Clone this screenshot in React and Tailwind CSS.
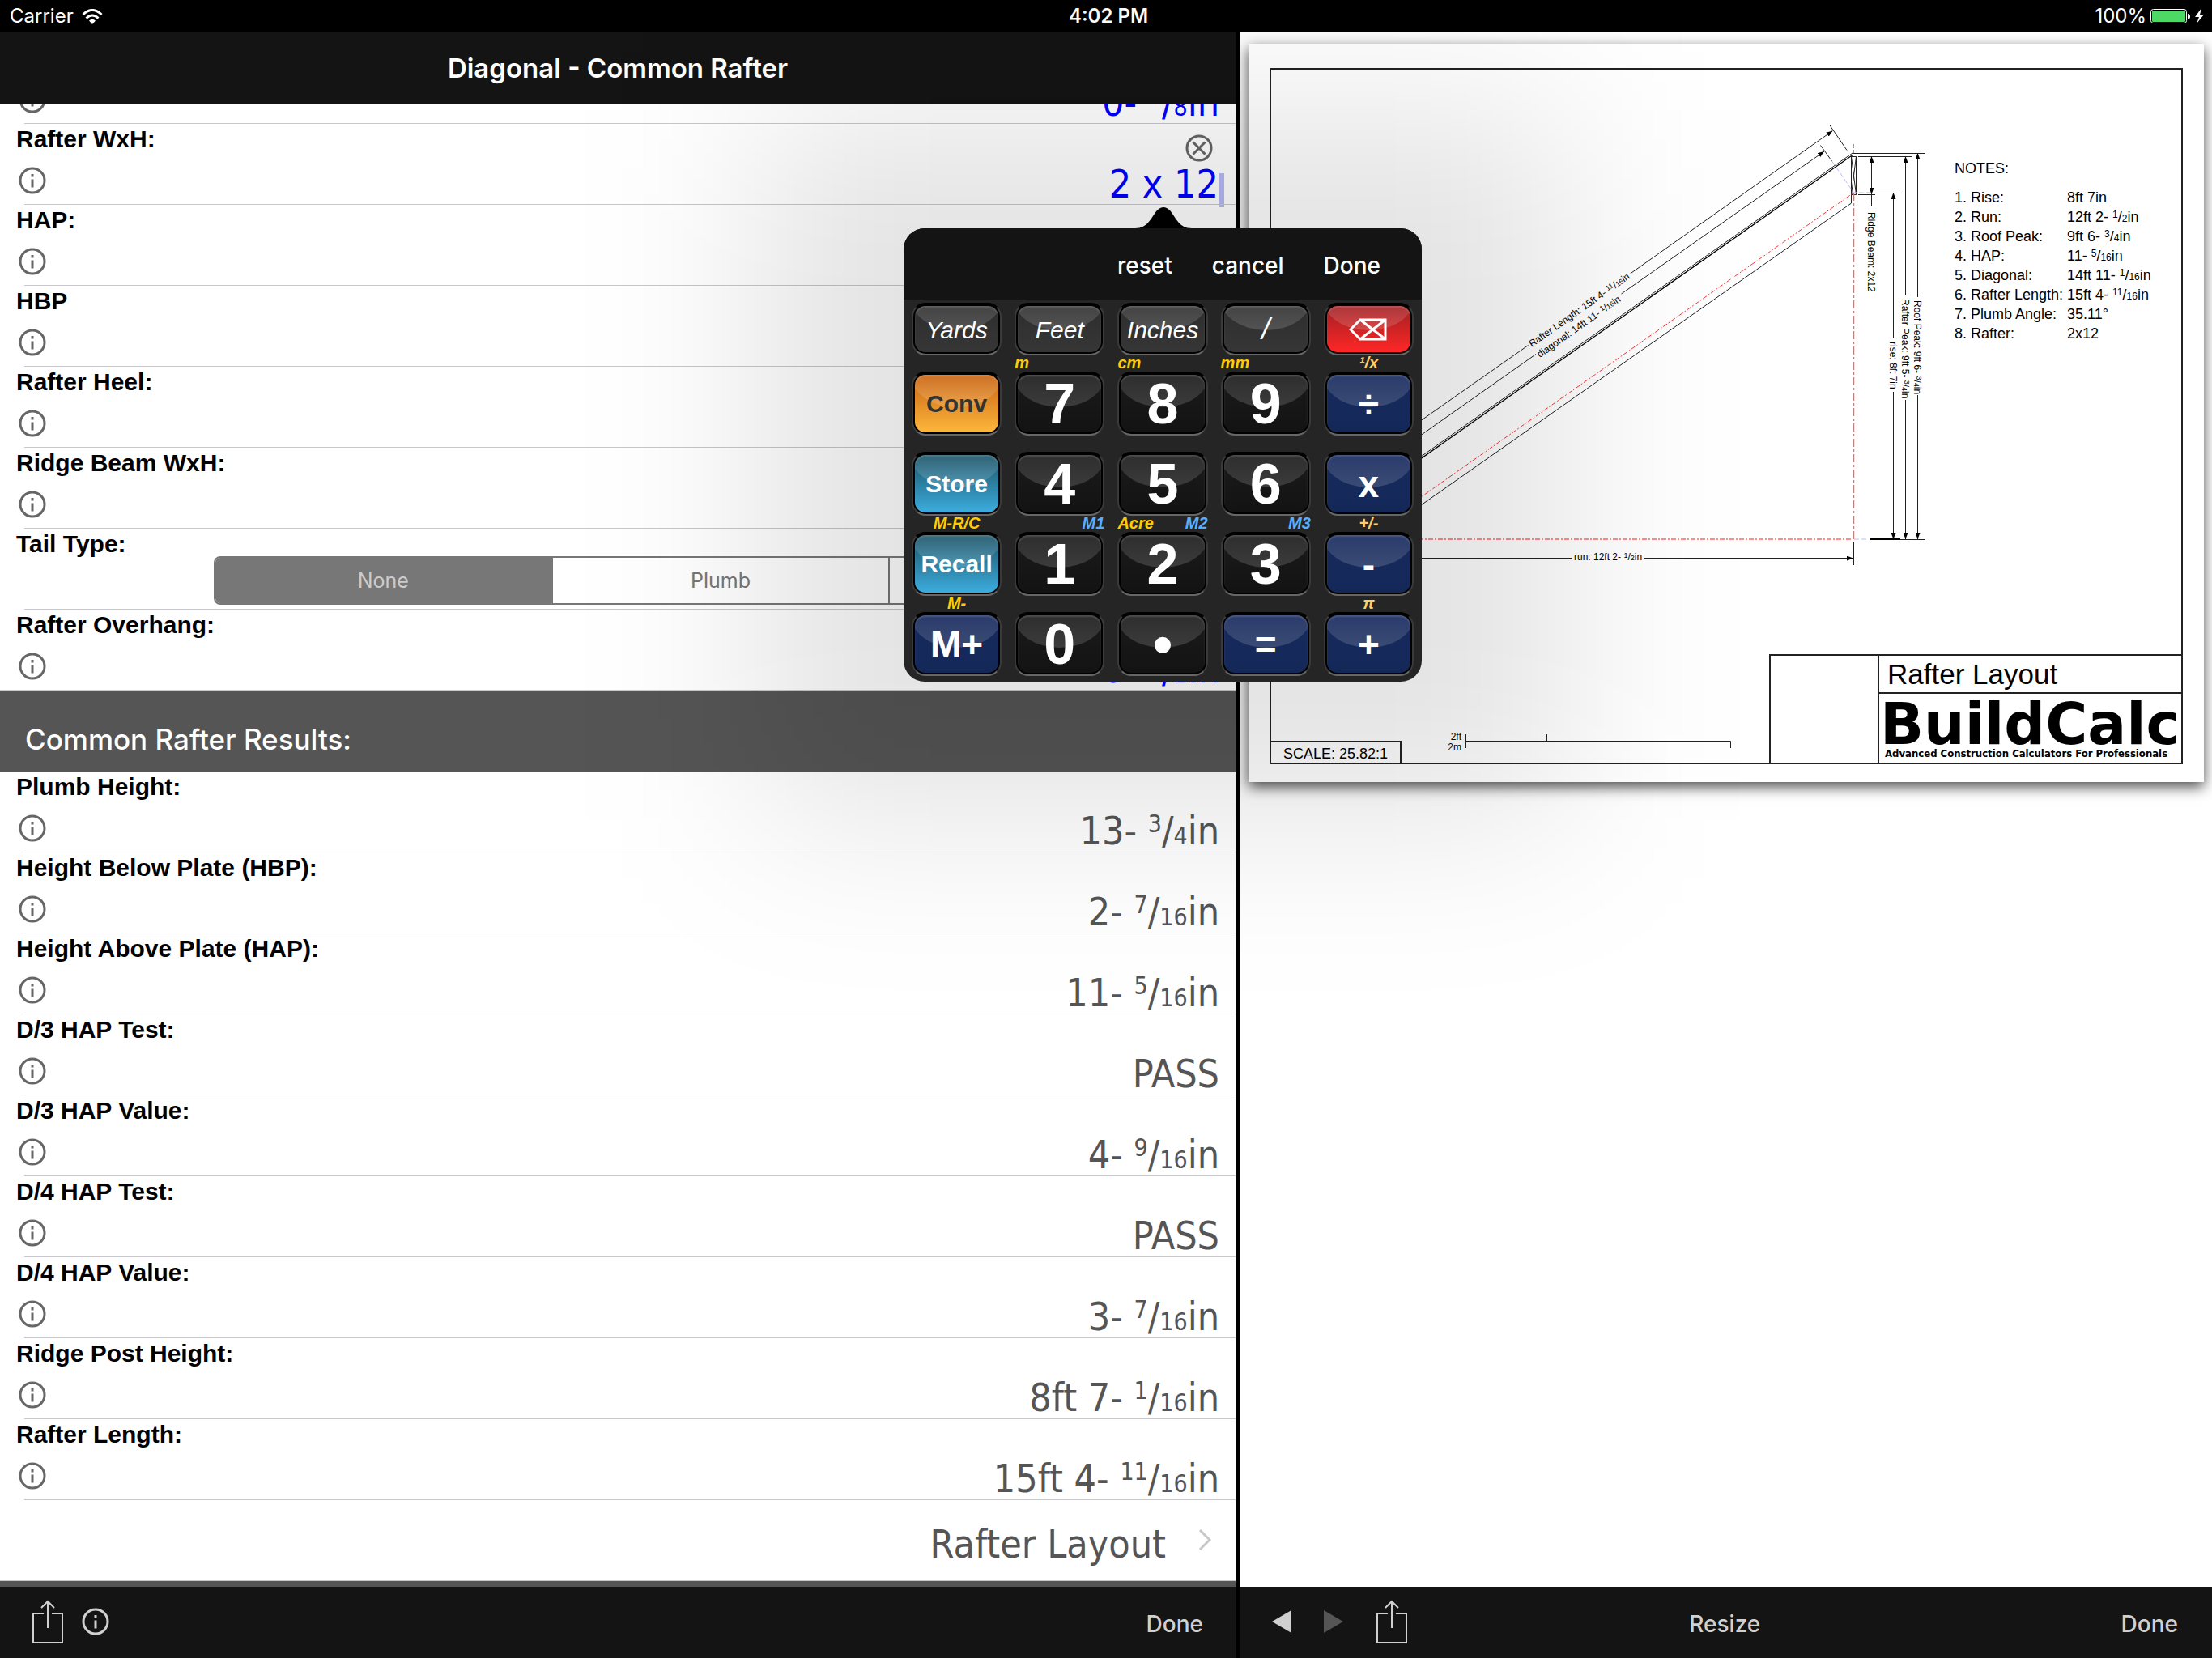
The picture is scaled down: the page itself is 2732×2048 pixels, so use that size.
import { useState } from 'react';

const INPUTS = ['HAP:', 'HBP', 'Rafter Heel:', 'Ridge Beam WxH:'];

const RESULTS = [
  { label: 'Plumb Height:', whole: '13-', frac: [3, 4] },
  { label: 'Height Below Plate (HBP):', whole: '2-', frac: [7, 16] },
  { label: 'Height Above Plate (HAP):', whole: '11-', frac: [5, 16] },
  { label: 'D/3 HAP Test:', whole: 'PASS' },
  { label: 'D/3 HAP Value:', whole: '4-', frac: [9, 16] },
  { label: 'D/4 HAP Test:', whole: 'PASS' },
  { label: 'D/4 HAP Value:', whole: '3-', frac: [7, 16] },
  { label: 'Ridge Post Height:', whole: '8ft 7-', frac: [1, 16] },
  { label: 'Rafter Length:', whole: '15ft 4-', frac: [11, 16] },
];

const NOTES = [
  { label: '1. Rise:', whole: '8ft 7in' },
  { label: '2. Run:', whole: '12ft 2-', frac: [1, 2] },
  { label: '3. Roof Peak:', whole: '9ft 6-', frac: [3, 4] },
  { label: '4. HAP:', whole: '11-', frac: [5, 16] },
  { label: '5. Diagonal:', whole: '14ft 11-', frac: [1, 16] },
  { label: '6. Rafter Length:', whole: '15ft 4-', frac: [11, 16] },
  { label: '7. Plumb Angle:', whole: '35.11°' },
  { label: '8. Rafter:', whole: '2x12' },
];

const KEY_ROWS = [
  [
    { text: 'Yards', tone: 'unit' },
    { text: 'Feet', tone: 'unit', left: 'm' },
    { text: 'Inches', tone: 'unit', left: 'cm' },
    { text: '/', tone: 'slash', left: 'mm' },
    { text: 'delete', tone: 'red', mid: '¹/x' },
  ],
  [
    { text: 'Conv', tone: 'orange' },
    { text: '7', tone: 'digit' },
    { text: '8', tone: 'digit' },
    { text: '9', tone: 'digit' },
    { text: '÷', tone: 'op' },
  ],
  [
    { text: 'Store', tone: 'teal', mid: 'M-R/C' },
    { text: '4', tone: 'digit', right: 'M1' },
    { text: '5', tone: 'digit', left: 'Acre', right: 'M2' },
    { text: '6', tone: 'digit', right: 'M3' },
    { text: 'x', tone: 'op', mid: '+/-' },
  ],
  [
    { text: 'Recall', tone: 'teal', mid: 'M-' },
    { text: '1', tone: 'digit' },
    { text: '2', tone: 'digit' },
    { text: '3', tone: 'digit' },
    { text: '-', tone: 'op', mid: 'π' },
  ],
  [
    { text: 'M+', tone: 'op' },
    { text: '0', tone: 'digit' },
    { text: '•', tone: 'digit' },
    { text: '=', tone: 'op' },
    { text: '+', tone: 'op' },
  ],
];

const TONES = {
  unit: 'bg-linear-to-b from-[#2e2e2e] to-[#363636] pt-[2px] text-white text-[30px] italic',
  slash: 'bg-linear-to-b from-[#2e2e2e] to-[#363636] text-white text-[36px] italic',
  digit: 'bg-linear-to-b from-[#1b1b1b] to-[#131313] text-white text-[70px] font-bold',
  op: 'bg-linear-to-b from-[#172a5e] to-[#142858] text-white text-[46px] font-bold',
  orange: 'bg-linear-to-b from-[#c8620f] to-[#fdb73c] text-[#333] text-[30px] font-bold',
  teal: 'bg-linear-to-b from-[#1d5468] to-[#3cadde] text-white text-[30px] font-bold',
  red: 'bg-linear-to-b from-[#a01f22] to-[#ff2626] text-white',
};

const InfoIcon = () => (
  <svg width="34" height="34" viewBox="0 0 34 34" fill="none" stroke="currentColor" strokeWidth="3">
    <circle cx="17" cy="17" r="15" />
    <path d="M17 15.5v10M17 9v3.4" />
  </svg>
);

const ClearIcon = () => (
  <svg width="34" height="34" viewBox="0 0 34 34" fill="none" stroke="currentColor" strokeWidth="3">
    <circle cx="17" cy="17" r="15" />
    <path d="M9.500 9.500l15 15M24.500 9.500l-15 15" />
  </svg>
);

const ShareIcon = () => (
  <svg width="40" height="54" viewBox="0 0 40 54" fill="none" stroke="currentColor" strokeWidth="2">
    <path d="M15 17H2v36h36V17H25" />
    <path d="M20 35V2M12 10l8-8 8 8" />
  </svg>
);

const DeleteIcon = () => (
  <svg width="48" height="28" viewBox="0 0 48 28" fill="none" stroke="currentColor" strokeWidth="3">
    <path d="M14 2h31v24H14L2 14z" />
    <path d="M14 2l31 24M45 2L14 26" />
  </svg>
);

const Value = ({ whole, frac }) => (
  <>
    {whole}
    {frac && (
      <>
        {' '}
        <span className="text-[30px] leading-none align-[15px]">{frac[0]}</span>/
        <span className="text-[30px] leading-none">{frac[1]}</span>in
      </>
    )}
  </>
);

const NoteValue = ({ whole, frac }) => (
  <>
    {whole}
    {frac && (
      <>
        {' '}
        <span className="text-[12px] leading-none align-[5px]">{frac[0]}</span>/
        <span className="text-[12px] leading-none">{frac[1]}</span>in
      </>
    )}
  </>
);

const Row = ({ label, info = true, children }) => (
  <div className="flex h-[100px] shrink-0 justify-between pr-2">
    <div className="flex flex-col pl-5">
      <span className="h-[53px] font-['Liberation_Sans',sans-serif] text-[30px] leading-[38px] font-bold whitespace-nowrap text-black">
        {label}
      </span>
      {info && (
        <button aria-label={`About ${label}`} className="ml-[3px] w-[34px] text-[#666]">
          <InfoIcon />
        </button>
      )}
    </div>
    {children}
  </div>
);

const Separator = () => <div className="-mt-px ml-[30px] h-px shrink-0 bg-[#c8c7cc]" />;

const Key = ({ item, short }) => (
  <button
    aria-label={item.text}
    className={`rounded-[17px] border-2 border-t-black border-x-[#3a3a3a] border-b-[#666] bg-black p-[2px] ${short ? 'h-[65px]' : 'h-[79px]'}`}
  >
    <span
      className={`relative flex h-full items-center justify-center overflow-hidden rounded-[13px] font-['Liberation_Sans',sans-serif] leading-none shadow-[inset_0_2px_2px_rgba(255,255,255,0.15)] ${TONES[item.tone]}`}
    >
      <span
        className={`absolute -inset-x-[6px] h-[84px] rounded-[50%] bg-linear-to-b from-white/0 to-white/16 ${short ? '-top-[54px]' : '-top-[44px]'}`}
      />
      <span className="relative">{item.tone === 'red' ? <DeleteIcon /> : item.text}</span>
    </span>
  </button>
);

const Caption = ({ item }) => (
  <div className="flex h-5 justify-between font-['Liberation_Sans',sans-serif] text-[20px] leading-[18px] font-bold whitespace-nowrap italic">
    {item.mid ? (
      <span className={`w-full text-center ${item.tone === 'teal' ? 'text-[#ffcc00]' : 'text-[#ffcc66]'}`}>{item.mid}</span>
    ) : (
      <>
        <span className="text-[#ffcc00]">{item.left}</span>
        <span className="text-[#5aaeff]">{item.right}</span>
      </>
    )}
  </div>
);

const Keypad = () => (
  <div className="absolute top-[216px] -right-[230px] z-20 w-[640px]">
    {/* wide soft shade around the popover */}
    <div className="pointer-events-none absolute -inset-x-[180px] -top-[120px] -bottom-[170px] -z-10 bg-black/11 blur-[110px]" />
    <svg className="ml-[286px] block" width="70" height="26" viewBox="0 0 70 26">
      <path d="M0 26C16 26 20 12 27 4Q35-4 43 4C50 12 54 26 70 26z" fill="#000" />
    </svg>
    <div className="overflow-hidden rounded-[26px] bg-[#252525]">
      <div className="flex h-[88px] items-center justify-end gap-[49px] bg-[#141414] pt-1 pr-[51px] text-[28px] font-medium text-white">
        <button>reset</button>
        <button>cancel</button>
        <button>Done</button>
      </div>
      <div className="px-[10px] pt-1 pb-[7px]">
        {KEY_ROWS.map((row, i) => (
          <div key={i}>
            <div className="grid grid-cols-5 gap-4">
              {row.map((item) => (
                <Key key={item.text} item={item} short={i === 0} />
              ))}
            </div>
            {i < 4 && (
              <div className="grid grid-cols-5 gap-4">
                {row.map((item) => (
                  <Caption key={item.text} item={item} />
                ))}
              </div>
            )}
          </div>
        ))}
      </div>
    </div>
  </div>
);

const Drawing = () => (
  <svg
    className="absolute inset-0 h-full w-full font-['Liberation_Sans',sans-serif] text-[12px]"
    viewBox="0 0 1180 912"
    fill="none"
    stroke="#222"
  >
    <defs>
      <marker id="arrow" viewBox="0 0 8 6" refX="8" refY="3" markerWidth="8" markerHeight="6" markerUnits="userSpaceOnUse" orient="auto-start-reverse">
        <path d="M0 0L8 3L0 6z" fill="#000" stroke="none" />
      </marker>
    </defs>

    {/* rafter */}
    <path d="M198 523L746 137.500" stroke="#000" strokeWidth="1.300" />
    <path d="M198 520.500L747.500 134" />
    <path d="M198 580.500L744.500 197V137" />
    <path d="M744.500 139.500h6v47h-6zM744.500 139.500l6 47M750.500 139.500l-6 47" />
    <path d="M198 570.500L747.500 184" stroke="#f33" strokeDasharray="6 2 2 2" />
    <path d="M747.500 184V612" stroke="#f66" strokeDasharray="10 3 3 3" strokeWidth="1.500" />
    <path d="M198 612H747" stroke="#f66" strokeDasharray="6 2 2 2" strokeWidth="1.500" />
    <path d="M720.500 145L747.500 184H772M748 612h18" stroke="#bbf" strokeDasharray="6 3" />
    <path d="M747.500 124v11" stroke="#999" strokeDasharray="5 2" />

    {/* sloped dimensions */}
    <path d="M198 476L345.500 372.500" />
    <path d="M471.500 284L721.500 107.500" markerEnd="url(#arrow)" />
    <path d="M198 494L355 383.500" />
    <path d="M460.500 309L711 133" markerEnd="url(#arrow)" />
    <path d="M717.500 100L739 131.500M706.500 125.500L720.500 145" />

    {/* vertical dimensions */}
    <path d="M747 135.500H835M753 139.500H820M753 184.500H805M753 186.500H774" />
    <path d="M769.500 139V186" markerStart="url(#arrow)" markerEnd="url(#arrow)" />
    <path d="M769.500 186V201" />
    <path d="M796.500 184V364" markerStart="url(#arrow)" />
    <path d="M796.500 430V612" markerEnd="url(#arrow)" />
    <path d="M811.500 139V311" markerStart="url(#arrow)" />
    <path d="M811.500 440V612" markerEnd="url(#arrow)" />
    <path d="M826.500 135V313" markerStart="url(#arrow)" />
    <path d="M826.500 434V612" markerEnd="url(#arrow)" />
    <path d="M767 612H805" stroke="#000" strokeWidth="2" />
    <path d="M805 612.500H835" />

    {/* run */}
    <path d="M198 635.500H399" />
    <path d="M488 635.500H747" markerEnd="url(#arrow)" />
    <path d="M747.500 616V644" />

    {/* scale bar */}
    <path d="M268.500 853V870M268.500 861.500H595.500V870M368.500 853V861" />

    <g fill="#000" stroke="none">
      <text transform="translate(350 375) rotate(-35.100)">
        Rafter Length: 15ft 4- <tspan fontSize="9" dy="-3">11</tspan>
        <tspan dy="3">/</tspan>
        <tspan fontSize="9">16</tspan>in
      </text>
      <text transform="translate(360 388) rotate(-35.100)">
        diagonal: 14ft 11- <tspan fontSize="9" dy="-3">1</tspan>
        <tspan dy="3">/</tspan>
        <tspan fontSize="9">16</tspan>in
      </text>
      <text transform="translate(765 208) rotate(90)">Ridge Beam: 2x12</text>
      <text transform="translate(792 368) rotate(90)">rise: 8ft 7in</text>
      <text transform="translate(807 315) rotate(90)">
        Rafter Peak: 9ft 5- <tspan fontSize="9" dy="-3">3</tspan>
        <tspan dy="3">/</tspan>
        <tspan fontSize="9">4</tspan>in
      </text>
      <text transform="translate(822 317) rotate(90)">
        Roof Peak: 9ft 6- <tspan fontSize="9" dy="-3">3</tspan>
        <tspan dy="3">/</tspan>
        <tspan fontSize="9">4</tspan>in
      </text>
      <text x="402" y="638">
        run: 12ft 2- <tspan fontSize="9" dy="-3">1</tspan>
        <tspan dy="3">/</tspan>
        <tspan fontSize="9">2</tspan>in
      </text>
      <text x="263" y="860" textAnchor="end">2ft</text>
      <text x="263" y="873" textAnchor="end">2m</text>
    </g>
  </svg>
);

const Sheet = () => (
  <div className="relative mx-[10px] mt-[14px] flex aspect-[1180/912] flex-col bg-white px-[26px] pt-[30px] pb-[22px] font-['Liberation_Sans',sans-serif] text-black shadow-[0_6px_16px_rgba(0,0,0,0.7)]">
    <Drawing />
    <div className="flex flex-1 flex-col justify-between border-2 border-[#222]">
      <table className="mt-[110px] mr-[5px] ml-auto w-[275px] text-left text-[18px] leading-[24px]">
        <caption className="pb-3 text-left">NOTES:</caption>
        <tbody>
          {NOTES.map((note) => (
            <tr key={note.label}>
              <th scope="row" className="w-[139px] p-0 font-normal whitespace-nowrap">{note.label}</th>
              <td className="h-6 p-0 whitespace-nowrap"><NoteValue {...note} /></td>
            </tr>
          ))}
        </tbody>
      </table>
      <div className="flex items-end justify-between">
        <div className="h-[27px] w-[161px] border-t-2 border-r-2 border-[#222] pl-[15px] text-[18px] leading-[28px]">
          SCALE: 25.82:1
        </div>
        <div className="flex h-[134px] border-t-2 border-l-2 border-[#222]">
          <div className="w-[132px]" />
          <div className="w-[375px] border-l-2 border-[#222]">
            <div className="h-[47px] border-b-2 border-[#222] pl-[10px] text-[35px] leading-[46px]">Rafter Layout</div>
            <div className="overflow-hidden pr-2 pl-px font-['DejaVu_Sans',sans-serif] font-bold whitespace-nowrap">
              <div className="h-[66px] text-[71px] leading-[76px]">BuildCalc</div>
              <div className="pl-[6px] font-['DejaVu_Sans_Condensed','DejaVu_Sans',sans-serif] text-[13px] leading-[16px]">
                Advanced Construction Calculators For Professionals
              </div>
            </div>
          </div>
        </div>
      </div>
    </div>
  </div>
);

const StatusBar = () => (
  <div className="grid h-10 grid-cols-3 items-center bg-black pr-[10px] pl-3 text-[24px] text-white">
    <div className="flex items-center gap-[10px]">
      <span>Carrier</span>
      <svg width="26" height="19" viewBox="0 0 26 19" fill="none" stroke="currentColor" strokeWidth="3">
        <path d="M1.500 7Q13-4 24.500 7M5.500 11.500Q13 4.500 20.500 11.500" />
        <path d="M9 14.500Q13 11 17 14.500L13 19z" fill="currentColor" stroke="none" />
      </svg>
    </div>
    <span className="pl-1 text-center font-semibold">4:02 PM</span>
    <div className="flex items-center justify-end gap-[5px]">
      <span>100%</span>
      <svg width="66" height="20" viewBox="0 0 66 20" fill="none">
        <rect x="0.500" y="1.500" width="44" height="17" rx="3" stroke="#fff" />
        <rect x="2" y="3" width="41" height="14" rx="1.500" fill="#4cd964" />
        <path d="M46 7c4 0 4 7 0 7z" fill="#fff" />
        <path d="M63 0L55 11h5l-3 8 9-11h-5z" fill="#fff" />
      </svg>
    </div>
  </div>
);

const App = () => {
  const [tail, setTail] = useState('None');

  return (
    <div className="flex h-screen flex-col overflow-hidden bg-black font-['Inter',sans-serif]">
      <StatusBar />
      <div className="grid min-h-0 flex-1 grid-cols-[1526fr_1200fr] gap-[6px]">
        <div className="relative z-10 flex min-h-0 flex-col">
          <header className="flex h-[88px] shrink-0 items-center justify-center bg-[#141414] pt-[2px] text-white">
            <h1 className="text-[33px] font-semibold">Diagonal - Common Rafter</h1>
          </header>

          <main className="flex min-h-0 flex-1 flex-col overflow-hidden bg-white font-['DejaVu_Sans_Condensed','DejaVu_Sans',sans-serif] text-[48px] text-[#555]">
            <div className="-mt-[75px] shrink-0">
              <Row label="">
                <span className="mr-3 self-end leading-[54px] text-[#0000ff]"><Value whole="0-" frac={[1, 8]} /></span>
              </Row>
            </div>
            <Separator />
            <Row label="Rafter WxH:">
              <div className="flex flex-col items-end">
                <button aria-label="Clear" className="mt-[13px] mr-[20px] text-[#666]"><ClearIcon /></button>
                <div className="flex flex-1 items-end">
                  <input
                    aria-label="Rafter WxH"
                    defaultValue="2 x 12"
                    className="h-[56px] w-[300px] bg-transparent pb-[2px] text-right text-[#0000ff] outline-none"
                  />
                  <span className="mr-[6px] ml-[1px] h-[42px] w-[6px] bg-[#b9b9f8]" />
                </div>
              </div>
            </Row>
            <Separator />
            {INPUTS.map((label) => (
              <div key={label} className="shrink-0">
                <Row label={label} />
                <Separator />
              </div>
            ))}
            <Row label="Tail Type:" info={false}>
              <div className="mt-[34px] flex h-[60px] w-[1254px] overflow-hidden rounded-[8px] border-2 border-[#777] font-['Inter',sans-serif] text-[25px]">
                {['None', 'Plumb', ''].map((name) => (
                  <button
                    key={name}
                    aria-label={name || 'Other'}
                    onClick={() => setTail(name)}
                    className={`flex-1 border-r-2 border-[#777] pt-[2px] ${tail === name ? 'bg-[#777] text-[#ccc]' : 'text-[#777]'}`}
                  >
                    {name}
                  </button>
                ))}
              </div>
            </Row>
            <Separator />
            <Row label="Rafter Overhang:">
              <span className="mr-3 self-end leading-[54px] text-[#0000ff]"><Value whole="0-" frac={[1, 2]} /></span>
            </Row>
            <h2 className="-my-px flex h-[102px] shrink-0 items-center border-y border-[#c8c7cc] bg-[#555] pt-[20px] pl-[31px] font-['Inter',sans-serif] text-[35px] font-medium text-white">
              Common Rafter Results:
            </h2>
            {RESULTS.map((item) => (
              <div key={item.label} className="shrink-0">
                <Row label={item.label}>
                  <span className="mr-3 self-end leading-[54px]"><Value {...item} /></span>
                </Row>
                <Separator />
              </div>
            ))}
            <a href="#layout" className="flex h-[100px] shrink-0 items-center justify-end gap-[40px] pt-2 pr-[30px]">
              Rafter Layout
              <svg className="-mt-[10px]" width="16" height="26" viewBox="0 0 16 26" fill="none" stroke="#c7c7cc" strokeWidth="3">
                <path d="M2 1l12 12L2 25" />
              </svg>
            </a>
            <div className="-mt-px h-2 shrink-0 border-t border-[#c8c7cc] bg-[#555]" />
          </main>

          <footer className="flex h-[88px] shrink-0 items-center bg-[#141414] pr-[40px] pb-[2px] pl-[39px] text-[28px] font-medium text-[#d0d0d0]">
            <button aria-label="Share"><ShareIcon /></button>
            <button aria-label="Info" className="ml-[22px]"><InfoIcon /></button>
            <button className="ml-auto pt-[6px]">Done</button>
          </footer>

          <Keypad />
        </div>

        <div className="flex min-h-0 flex-col bg-white">
          <div className="flex-1">
            <Sheet />
          </div>
          <footer className="flex h-[88px] shrink-0 items-center justify-between bg-[#141414] pr-[42px] pb-[2px] pl-[39px] text-[28px] font-medium text-[#d0d0d0]">
            <div className="flex items-center gap-[40px]">
              <button aria-label="Previous">
                <svg width="24" height="28" viewBox="0 0 24 28" fill="currentColor"><path d="M24 0v28L0 14z" /></svg>
              </button>
              <button aria-label="Next" className="text-[#555]">
                <svg width="24" height="28" viewBox="0 0 24 28" fill="currentColor"><path d="M0 0v28l24-14z" /></svg>
              </button>
              <button aria-label="Share"><ShareIcon /></button>
            </div>
            <button className="pt-[6px] pr-[98px]">Resize</button>
            <button className="pt-[6px]">Done</button>
          </footer>
        </div>
      </div>
    </div>
  );
};

export default App;
